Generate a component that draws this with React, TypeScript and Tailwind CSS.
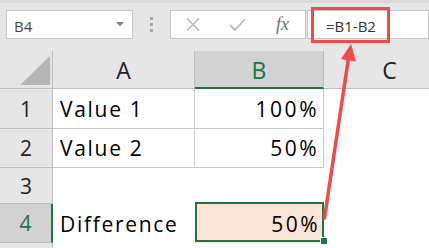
import React from "react";

const font = { fontFamily: '"Open Sans", "DejaVu Sans", sans-serif' };

export default function App() {
  return (
    <div className="relative w-[429px] h-[248px] overflow-hidden bg-white text-black" style={font}>
      {/* Formula bar */}
      <div className="h-[51px] bg-[#e6e6e6] border-t-[3px] border-[#dadada] flex items-start pt-[7px]">
        <div className="ml-[6px] w-[127px] h-[29px] bg-white border border-[#c6c6c6] flex items-center justify-between pl-[7px] pr-[8px] pt-[3px]">
          <span className="text-[15px] leading-none text-[#444]">B4</span>
          <svg width="8" height="5" viewBox="0 0 8 5" className="-mt-[3px]">
            <polygon points="0,0 8,0 4,4.5" fill="#808080" />
          </svg>
        </div>
        <div className="w-[37px] h-[29px] flex flex-col items-center justify-center gap-[3px]">
          <div className="w-[3px] h-[3px] bg-[#a8a8a8]" />
          <div className="w-[3px] h-[3px] bg-[#a8a8a8]" />
          <div className="w-[3px] h-[3px] bg-[#a8a8a8]" />
        </div>
        <div className="w-[136px] h-[29px] bg-white border border-[#c6c6c6] flex items-center">
          <div className="w-[43px] flex justify-center">
            <svg width="14" height="13" viewBox="0 0 14 13">
              <path d="M1 0.5 L13 12.5 M13 0.5 L1 12.5" stroke="#bababa" strokeWidth="1.6" fill="none" />
            </svg>
          </div>
          <div className="w-[46px] flex justify-center">
            <svg width="17" height="13" viewBox="0 0 17 13">
              <path d="M1 7 L6 12 L16 1" stroke="#bababa" strokeWidth="1.8" fill="none" />
            </svg>
          </div>
          <div className="w-[45px] flex justify-center">
            <span
              className="text-[18px] leading-none italic text-[#707070] -mt-[1px]"
              style={{ fontFamily: '"Liberation Serif", serif' }}
            >
              fx
            </span>
          </div>
        </div>
        <div className="flex-1 h-[29px] ml-[1px] bg-white border border-[#c6c6c6] flex items-center pl-[18px] pt-[3px]">
          <span className="text-[15px] leading-none text-[#333]">=B1-B2</span>
        </div>
      </div>

      {/* Column headers */}
      <div className="flex h-[38px] leading-none">
        <div className="w-[53px] shrink-0 bg-[#e6e6e6] border-r border-b border-[#bdbdbd] relative">
          <svg width="53" height="37" viewBox="0 0 53 37" className="absolute left-0 top-0">
            <polygon points="50,5 50,34 20,34" fill="#b5b5b5" />
          </svg>
        </div>
        <div className="w-[142px] shrink-0 bg-[#e6e6e6] border-r border-b border-[#bdbdbd] flex items-end justify-center pb-[6px] text-[23px] text-[#222]">
          A
        </div>
        <div className="w-[129px] shrink-0 bg-[#d2d2d2] border-r border-[#bdbdbd] border-b-2 border-b-[#217346] flex items-end justify-center pb-[5px] text-[23px] text-[#217346]">
          B
        </div>
        <div className="w-[131px] shrink-0 bg-[#e6e6e6] border-b border-[#bdbdbd] flex items-end justify-center pb-[6px] text-[23px] text-[#222]">
          C
        </div>
      </div>

      {/* Row 1 */}
      <div className="flex h-[40px] leading-none text-[21px]">
        <div className="w-[53px] shrink-0 bg-[#e6e6e6] border-r border-b border-[#bdbdbd] flex items-end justify-center pb-[8px] text-[#222]">
          1
        </div>
        <div className="w-[142px] shrink-0 border-r border-b border-[#c8c8c8] flex items-end pl-[7px] pb-[8px] tracking-[1.7px]">
          Value 1
        </div>
        <div className="w-[129px] shrink-0 border-r border-b border-[#c8c8c8] flex items-end justify-end pr-[4px] pb-[8px] tracking-[2.5px]">
          100%
        </div>
        <div className="flex-1" />
      </div>

      {/* Row 2 */}
      <div className="flex h-[39px] leading-none text-[21px]">
        <div className="w-[53px] shrink-0 bg-[#e6e6e6] border-r border-b border-[#bdbdbd] flex items-end justify-center pb-[8px] text-[#222]">
          2
        </div>
        <div className="w-[142px] shrink-0 border-r border-b border-[#c8c8c8] flex items-end pl-[7px] pb-[8px] tracking-[1.7px]">
          Value 2
        </div>
        <div className="w-[129px] shrink-0 border-r border-b border-[#c8c8c8] flex items-end justify-end pr-[4px] pb-[8px] tracking-[2.5px]">
          50%
        </div>
        <div className="flex-1" />
      </div>

      {/* Row 3 */}
      <div className="flex h-[36px] leading-none text-[21px]">
        <div className="w-[53px] shrink-0 bg-[#e6e6e6] border-r border-b border-[#bdbdbd] flex items-end justify-center pb-[6px] text-[#222]">
          3
        </div>
        <div className="flex-1" />
      </div>

      {/* Row 4 */}
      <div className="flex h-[39px] leading-none text-[21px]">
        <div className="w-[53px] shrink-0 bg-[#d2d2d2] border-r-2 border-r-[#217346] border-b border-b-[#bdbdbd] flex items-end justify-center pb-[8px] text-[#217346]">
          4
        </div>
        <div className="w-[142px] shrink-0 flex items-end pl-[7px] pb-[8px] tracking-[1.7px]">
          Difference
        </div>
        <div className="w-[129px] shrink-0 relative bg-[#fce4d6] flex items-end justify-end pr-[4px] pb-[8px] tracking-[2.5px]">
          50%
          <div className="absolute -top-[2px] left-0 right-0 bottom-[1px] border-2 border-[#217346]" />
          <div className="absolute -right-[3px] -bottom-[1px] w-[6px] h-[6px] bg-[#217346] outline outline-1 outline-white" />
        </div>
        <div className="flex-1" />
      </div>

      {/* Row 5 */}
      <div className="flex h-[10px]">
        <div className="w-[53px] shrink-0 bg-[#e6e6e6] border-r border-[#bdbdbd]" />
        <div className="flex-1" />
      </div>

      {/* Annotation: red box around formula */}
      <div className="absolute left-[311px] top-[7px] w-[79px] h-[36px] border-[3px] border-[#f24a4a]" />
      {/* Annotation: red arrow */}
      <svg
        className="absolute left-0 top-0 pointer-events-none"
        width="429"
        height="248"
        viewBox="0 0 429 248"
      >
        <line x1="324.5" y1="218" x2="348.5" y2="58" stroke="#f24a4a" strokeWidth="3.5" strokeLinecap="round" />
        <polygon points="351,44 356,61.5 341,59" fill="#f24a4a" />
      </svg>
    </div>
  );
}
